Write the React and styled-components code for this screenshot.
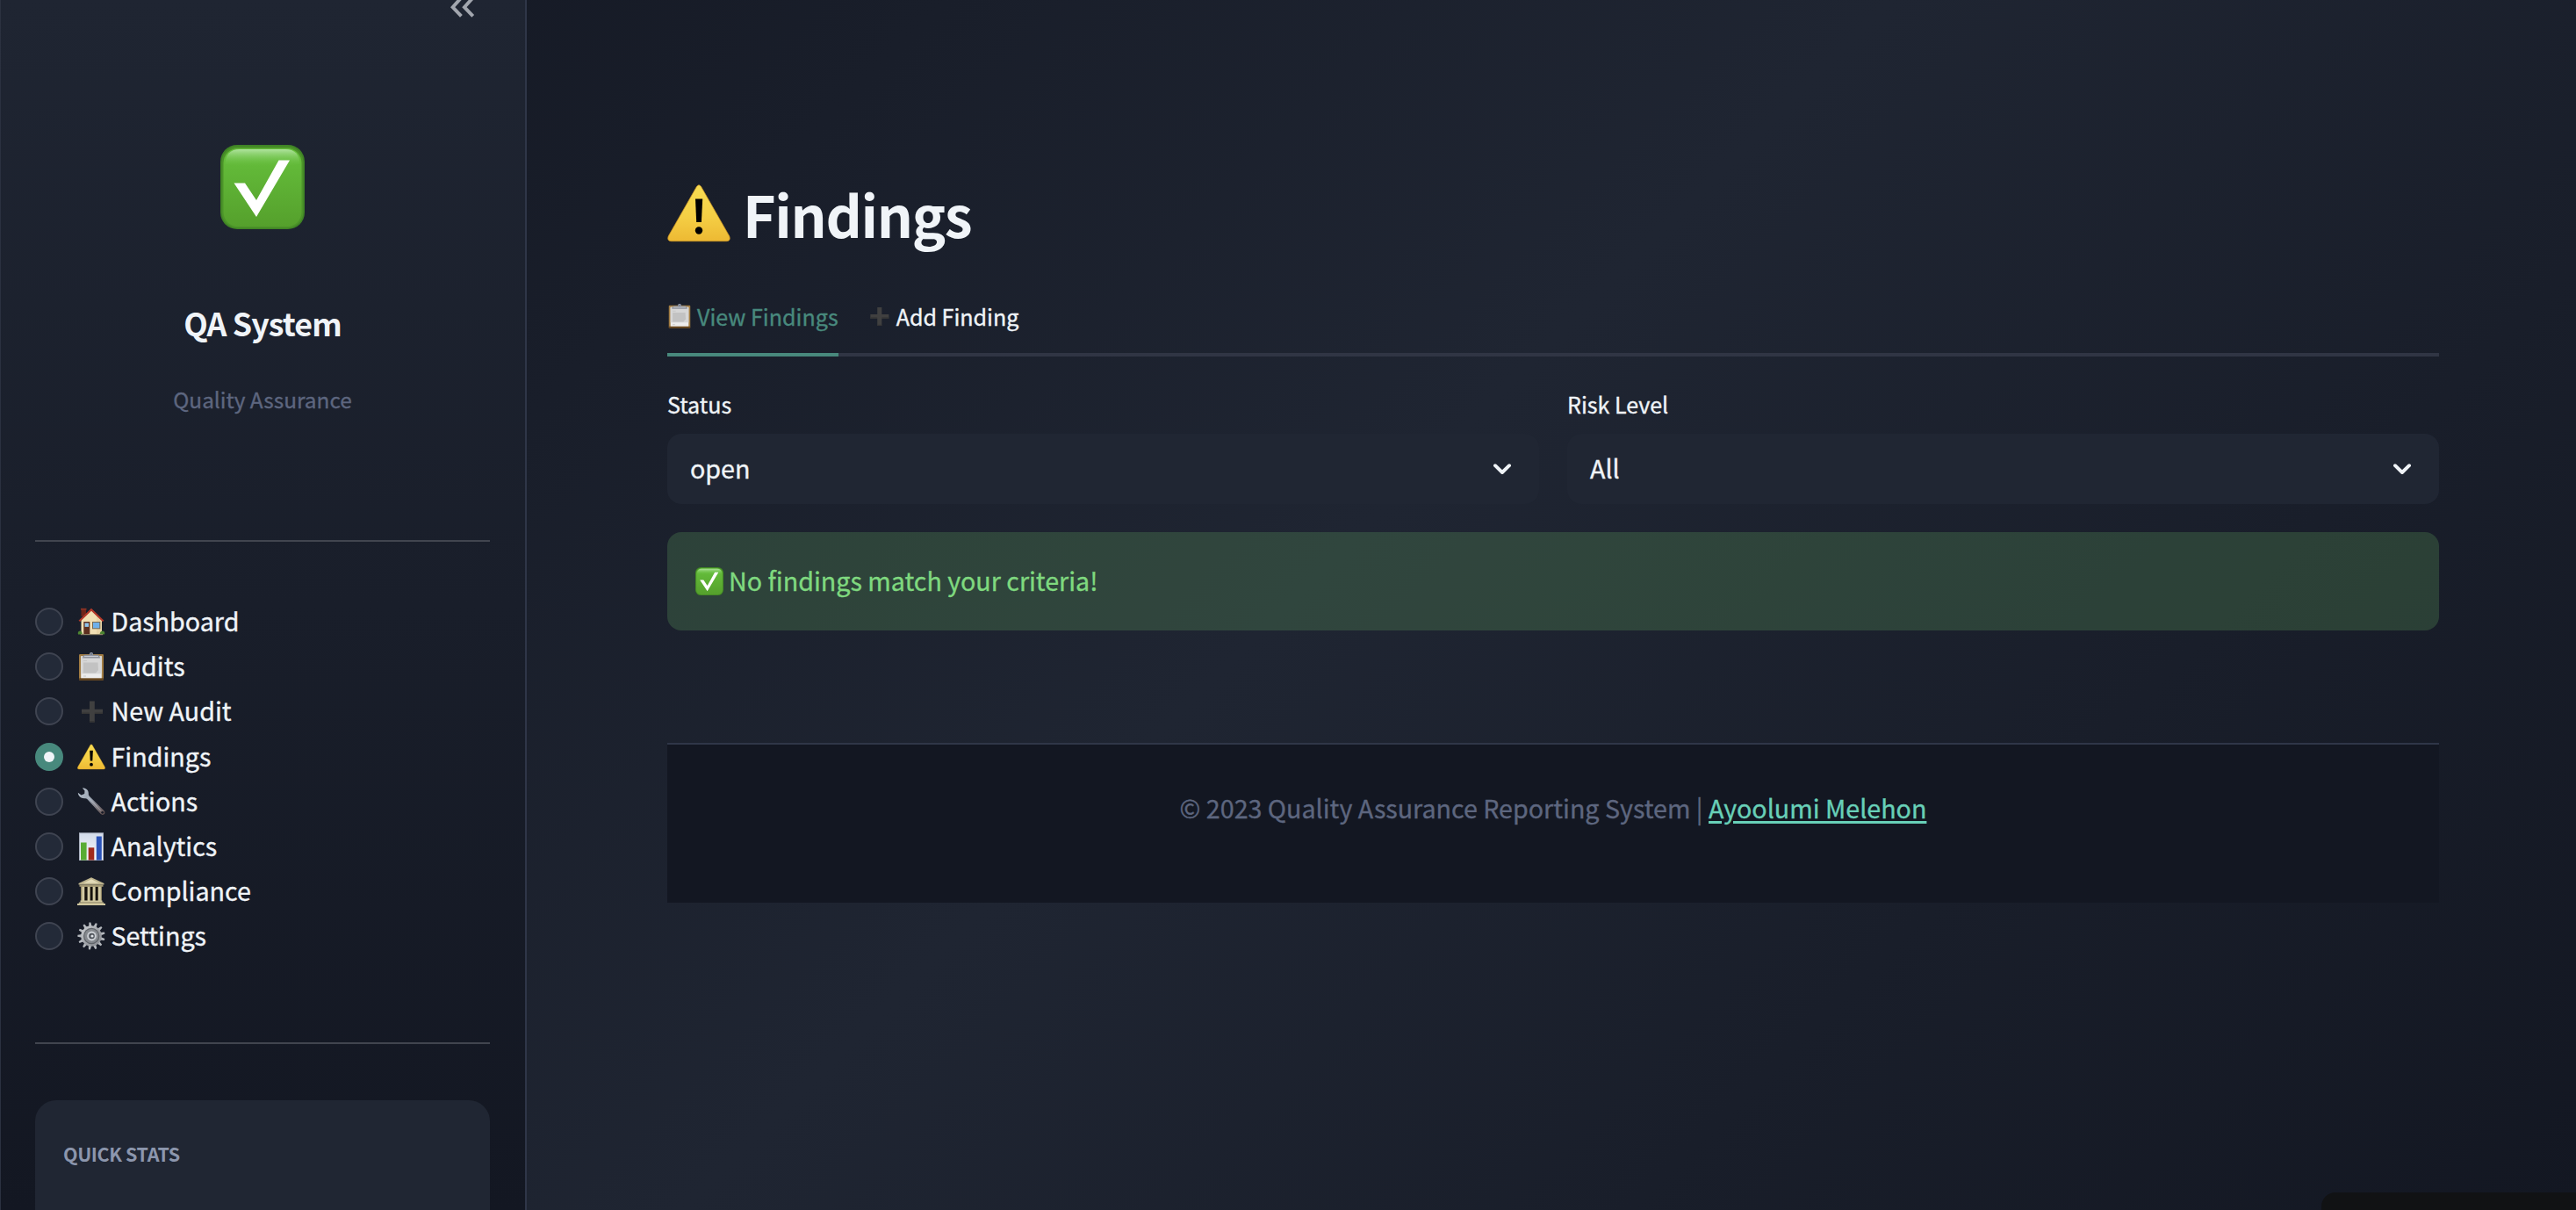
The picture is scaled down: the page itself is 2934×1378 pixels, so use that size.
import React from "react";
import styled, { createGlobalStyle, css } from "styled-components";

const ink = "#f0f4f8";
const teal = "#48897d";
const panel = "#1f2532";
const night = "#131722";

const GlobalStyle = createGlobalStyle`
  *, *::before, *::after { box-sizing: border-box; }
  html, body { margin: 0; overflow: hidden; }
  body {
    font-family: "Noto Sans CJK SC", "Noto Sans", sans-serif;
    color: ${ink};
    background: ${night};
    -webkit-text-stroke: 0.35px currentColor;
  }
  svg { display: block; flex: none; }
`;

const Page = styled.div`
  display: flex;
  width: 100vw;
  height: 100vh;
  overflow: hidden;
  position: relative;
  background: linear-gradient(135deg, ${night} 0%, ${panel} 50%, ${night} 100%);
`;

/* ---------- sidebar ---------- */

const Sidebar = styled.aside`
  flex: none;
  width: 600px;
  height: 100vh;
  overflow: hidden;
  display: flex;
  flex-direction: column;
  padding: 0 40px 0 39px;
  border-left: 1px solid #2b3140;
  border-right: 2px solid #2f3648;
  background: linear-gradient(180deg, ${panel} 0%, ${night} 100%);
`;

const CollapseRow = styled.div`
  flex: none;
  height: 20px;
  overflow: hidden;
  display: flex;
  justify-content: flex-end;
  align-items: flex-end;
  padding-right: 17px;
`;

const Brand = styled.div`
  flex: none;
  display: flex;
  flex-direction: column;
  align-items: center;
  padding-top: 145px;
`;

const BrandName = styled.div`
  margin-top: 82px;
  font-size: 35.8px;
  line-height: 48px;
  font-weight: 700;
  letter-spacing: -0.9px;
  -webkit-text-stroke: 0;
`;

const BrandTagline = styled.div`
  margin-top: 44px;
  font-size: 24.4px;
  line-height: 40px;
  color: #5d667f;
`;

const Rule = styled.hr`
  flex: none;
  width: 100%;
  height: 2px;
  border: 0;
  margin: ${(p) => p.$space};
  background: #41454f;
`;

const Menu = styled.ul`
  flex: none;
  list-style: none;
  margin: 0;
  padding: 0;
`;

const MenuItem = styled.li`
  height: 51.2px;
  display: flex;
  align-items: center;
`;

const Radio = styled.span`
  flex: none;
  width: 32px;
  height: 32px;
  margin-right: 16px;
  border-radius: 50%;
  display: flex;
  align-items: center;
  justify-content: center;
  background: #232a38;
  border: 2px solid #3f4451;
  ${(p) =>
    p.$on &&
    css`
      background: ${teal};
      border-color: ${teal};
      &::after {
        content: "";
        width: 12px;
        height: 12px;
        border-radius: 50%;
        background: ${ink};
      }
    `}
`;

const Label = styled.span`
  font-size: 28.65px;
  line-height: 40px;
  padding-bottom: ${(p) => p.$lift || "3px"};
  margin-left: ${(p) => p.$gap || "0"};
  white-space: nowrap;
`;

const StatsCard = styled.section`
  flex: none;
  height: 200px;
  padding: 45px 32px;
  border-radius: 24px;
  background: #202633;
`;

const StatsTitle = styled.div`
  font-size: 21.5px;
  line-height: 32px;
  font-weight: 700;
  letter-spacing: -0.4px;
  color: #8c96ad;
  -webkit-text-stroke: 0;
`;

/* ---------- main ---------- */

const Main = styled.main`
  flex: 1;
  min-width: 0;
  display: flex;
  flex-direction: column;
  padding: 200px 156px 0 160px;
`;

const Heading = styled.h1`
  margin: 0;
  height: 86px;
  display: flex;
  align-items: center;
  gap: 14px;
  font-size: 64.4px;
  line-height: 86px;
  font-weight: 700;
  letter-spacing: -1.35px;
  -webkit-text-stroke: 0;
`;

const Tabs = styled.div`
  margin-top: 54px;
  height: 66px;
  display: flex;
  gap: 32px;
  box-shadow: inset 0 -4px 0 #303544;
`;

const Tab = styled.div`
  display: flex;
  gap: 6px;
  height: 66px;
  font-size: 25.07px;
  line-height: 40px;
  color: ${(p) => (p.$active ? teal : ink)};
  border-bottom: 4px solid ${(p) => (p.$active ? teal : "transparent")};
  & > svg { margin-top: 6px; }
`;

const Filters = styled.div`
  margin-top: 34px;
  display: grid;
  grid-template-columns: 1fr 1fr;
  gap: 32px;
`;

const FieldLabel = styled.div`
  font-size: 25.07px;
  line-height: 40px;
  margin-bottom: 14px;
`;

const Select = styled.div`
  height: 80px;
  padding: 0 32px 0 26px;
  display: flex;
  align-items: center;
  justify-content: space-between;
  border-radius: 16px;
  background: #202633;
`;

const Alert = styled.div`
  margin-top: 32px;
  height: 112px;
  padding: 0 32px;
  display: flex;
  align-items: center;
  border-radius: 16px;
  color: #7fd97f;
  background: rgba(120, 205, 110, 0.2);
`;

const Footer = styled.footer`
  margin-top: 128px;
  height: 182px;
  padding-top: 52px;
  border-top: 2px solid #2f3648;
  background: ${night};
  color: #5d667f;
  text-align: center;
  font-size: 28.65px;
  line-height: 40px;
`;

const FooterLink = styled.a`
  color: #68d0b8;
  text-decoration: underline;
  text-decoration-thickness: 3px;
  text-underline-offset: 3px;
`;

const CornerBadge = styled.div`
  position: absolute;
  right: 0;
  bottom: 0;
  width: 290px;
  height: 20px;
  border-top-left-radius: 16px;
  background: #111214;
`;

/* ---------- drawings ---------- */

const CheckIcon = ({ size, id }) => (
  <svg width={size} height={size} viewBox="0 0 96 96">
    <defs>
      <linearGradient id={id + "b"} x1="0" y1="0" x2="0" y2="1">
        <stop offset="0" stopColor="#66c03c" />
        <stop offset="1" stopColor="#55a02c" />
      </linearGradient>
      <linearGradient id={id + "g"} x1="0" y1="0" x2="0" y2="1">
        <stop offset="0" stopColor="#b4e5a4" stopOpacity=".95" />
        <stop offset="1" stopColor="#66c03c" stopOpacity="0" />
      </linearGradient>
    </defs>
    <rect width="96" height="96" rx="19" fill="#3f8325" />
    <rect x="1.5" y="2" width="93" height="92.500" rx="18" fill="#4c9429" />
    <rect x="3.500" y="4" width="89" height="89" rx="16.500" fill={`url(#${id}b)`} />
    <path d="M5.500 22Q6 5 22 5H74Q90 5 90.500 22Q76 25 48 25T5.500 22Z" fill={`url(#${id}g)`} />
    <path d="M66.500 17.500H79L41 82L15.500 43.500H28L41 63Z" fill="#fff" />
  </svg>
);

const WarningIcon = ({ size, id }) => (
  <svg width={size} height={size} viewBox="0 0 72 72">
    <defs>
      <linearGradient id={id} x1="0" y1="0" x2="0" y2="1">
        <stop offset="0" stopColor="#f7dc52" />
        <stop offset=".55" stopColor="#f5cf45" />
        <stop offset="1" stopColor="#edb933" />
      </linearGradient>
    </defs>
    <path
      d="M33.400 5.600Q36 1.800 38.600 5.600L70.800 62Q72.600 67.600 67.500 67.700H4.500Q-.600 67.600 1.200 62Z"
      fill={`url(#${id})`}
      stroke="#c98f22"
      strokeWidth=".7"
    />
    <path d="M32 19.500H40.200L38.900 46H33.200Z" fill="#000" />
    <circle cx="36" cy="55.500" r="4.200" fill="#000" />
  </svg>
);

const HomeIcon = () => (
  <svg width="32" height="32" viewBox="0 0 32 32">
    <path d="M4.500 1H10V10H4.500Z" fill="#6f2419" />
    <path d="M4 .8H10.500V2.600H4Z" fill="#8c3325" />
    <path d="M4.500 14L16 3L28 14.500V30.500H4.500Z" fill="#f1dfb4" />
    <path d="M22 9L28 14.500V30.500H22Z" fill="#e4cf9f" opacity=".6" />
    <path d="M1.500 14.800L16 .8L30.500 14.800L28.800 16L16 3.800L3.200 16Z" fill="#b5392a" />
    <rect x="7.300" y="16" width="7" height="14.500" fill="#5d2f1f" />
    <rect x="8.600" y="17.500" width="4.400" height="4.400" fill="#8fc4ee" />
    <rect x="17" y="16" width="9.300" height="8.300" fill="#7a6a50" />
    <rect x="18" y="17" width="7.300" height="6.300" fill="#6fb0ea" />
    <path d="M1 30.500Q0 27 3 26.500Q5.500 26.500 5.800 30.500Z" fill="#4d8431" />
    <path d="M25.500 30.500Q26 26.500 29 26.500Q32 27 31 30.500Z" fill="#4d8431" />
    <rect x="4" y="30" width="25" height="1.200" fill="#8c8166" />
  </svg>
);

const ClipboardIcon = ({ size }) => (
  <svg width={size} height={size} viewBox="0 0 32 32">
    <rect x="2" y="2" width="28" height="29.800" rx="1.200" fill="#a07b42" />
    <rect x="2" y="29.300" width="28" height="2.500" rx="1" fill="#60411d" />
    <rect x="4.200" y="4.300" width="23.600" height="25" fill="#ececec" />
    <rect x="4.200" y="4.300" width="23.600" height="20" fill="#d6d6d6" />
    <path d="M7 9.500H11M7 27H10" stroke="#c2c2c2" strokeWidth=".8" />
    <path d="M7 11.500H23.500L24 20L21 23.500H7Z" fill="#c2c2c2" />
    <path d="M6 6.500Q6.300 3 9 2.800H23Q25.700 3 26 6.500Z" fill="#8d919b" />
    <path d="M8 4.200H24V5H8Z" fill="#d8dbe2" />
    <circle cx="16" cy="2" r="2.100" fill="#8f97a6" />
    <circle cx="16" cy="1.900" r=".8" fill="#59606e" />
  </svg>
);

const PlusIcon = ({ size }) => (
  <svg width={size} height={size} viewBox="0 0 32 32">
    <path d="M14 4.500H19.800V13.800H29V19H19.800V28.500H14V19H5V13.800H14Z" fill="#404040" />
    <path d="M5 17.500H14V19H5ZM19.800 17.500H29V19H19.800ZM14 27H19.800V28.500H14Z" fill="#353535" />
  </svg>
);

const WrenchIcon = () => (
  <svg width="32" height="32" viewBox="0 0 32 32">
    <defs>
      <linearGradient id="wr" x1="0" y1="0" x2="1" y2="1">
        <stop offset="0" stopColor="#b9c3cf" />
        <stop offset=".45" stopColor="#9aa3b0" />
        <stop offset="1" stopColor="#5d4a48" />
      </linearGradient>
    </defs>
    <path
      d="M5.800 .6C10 .2 13.200 3 12.800 7.300Q12.800 8.800 14 10L30.500 26.200Q32.400 28.500 30.600 30.300Q28.600 31.800 26.500 29.800L11.500 13.200Q10.300 12 8.600 12.200C4.600 12.600 1.200 10 .8 5.800L4.600 8.400L8.200 6.900L8.500 3.500Z"
      fill="url(#wr)"
    />
    <path d="M12 10.500L27 26.500" stroke="#d6dce4" strokeWidth="1" opacity=".5" />
    <circle cx="28.700" cy="28.300" r="1.400" fill="#181c29" />
  </svg>
);

const ChartIcon = () => (
  <svg width="32" height="32" viewBox="0 0 32 32">
    <defs>
      <linearGradient id="ch" x1="0" y1="0" x2="0" y2="1">
        <stop offset="0" stopColor="#d3dceb" />
        <stop offset="1" stopColor="#f6f8fb" />
      </linearGradient>
    </defs>
    <rect x="2" y=".2" width="28" height="31.800" fill="#a9b0bf" />
    <rect x="3" y="1.200" width="26" height="30" fill="url(#ch)" />
    <rect x="4" y="11.500" width="6.600" height="20" fill="#58ac33" />
    <rect x="12.700" y="17.300" width="6.600" height="14.200" fill="#a12a1c" />
    <rect x="21.800" y="4.500" width="6" height="27" fill="#2b53b8" />
  </svg>
);

const TempleIcon = () => (
  <svg width="32" height="32" viewBox="0 0 32 32">
    <path d="M4 9H28V27H4Z" fill="#8f8564" />
    <path d="M8 11H12V27H8ZM14.500 11H18V27H14.500ZM20.500 11H24.500V27H20.500Z" fill="#15110c" />
    <path d="M5.300 10H8.300V27H5.300ZM11.600 10H14.500V27H11.600ZM17.600 10H20.500V27H17.600ZM23.700 10H26.800V27H23.700Z" fill="#d3caa2" />
    <path d="M16 .3L30.500 7V8.500H1.500V7Z" fill="#bdb48e" />
    <path d="M16 2.300L25 6.800H7Z" fill="#e2dab8" />
    <rect x="2.500" y="8.500" width="27" height="2.300" fill="#a09672" />
    <rect x="3.500" y="26.500" width="25" height="2.200" fill="#d0c7a0" />
    <rect x="1.800" y="28.500" width="28.400" height="1.700" fill="#b5ab83" />
    <rect x="0" y="30" width="32" height="2" fill="#d0c7a0" />
  </svg>
);

const GearIcon = () => (
  <svg width="32" height="32" viewBox="0 0 32 32">
    <defs>
      <linearGradient id="gr" x1="0" y1="0" x2="1" y2="1">
        <stop offset="0" stopColor="#d0d3d6" />
        <stop offset=".5" stopColor="#a2a5aa" />
        <stop offset="1" stopColor="#86898e" />
      </linearGradient>
    </defs>
    {Array.from({ length: 13 }, (_, i) => (
      <path
        key={i}
        d="M14.200 5.500L15 .4H17L17.800 5.500Z"
        fill="#b4b8bd"
        transform={`rotate(${(i * 360) / 13 - 6} 16 16)`}
      />
    ))}
    <circle cx="16" cy="16" r="11.800" fill="url(#gr)" />
    <circle cx="16.200" cy="16" r="9.200" fill="#5f6368" />
    <circle cx="16.200" cy="16" r="8" fill="#85898e" />
    <circle cx="16.500" cy="16" r="5.400" fill="#c9cdd2" />
    <circle cx="16.500" cy="16" r="3.300" fill="#4d5259" />
    <circle cx="17" cy="16" r="1.600" fill="#dfe3e8" />
  </svg>
);

const ChevronDown = () => (
  <svg width="20" height="13" viewBox="0 0 20 13">
    <path d="M2 2.200L10 10L18 2.200" fill="none" stroke={ink} strokeWidth="3.900" strokeLinecap="round" strokeLinejoin="round" />
  </svg>
);

const CollapseIcon = () => (
  <svg width="28" height="24" viewBox="0 0 28 24">
    <path
      d="M12.400 1.400L2.600 12.200L12.400 22.400M25.700 1.400L15.900 12.200L25.700 22.400"
      fill="none"
      stroke="#a2a6ae"
      strokeWidth="3.900"
    />
  </svg>
);

const pages = [
  { name: "Dashboard", icon: <HomeIcon /> },
  { name: "Audits", icon: <ClipboardIcon size={32} /> },
  { name: "New Audit", icon: <PlusIcon size={32} /> },
  { name: "Findings", icon: <WarningIcon size={32} id="warnMenu" />, active: true },
  { name: "Actions", icon: <WrenchIcon /> },
  { name: "Analytics", icon: <ChartIcon /> },
  { name: "Compliance", icon: <TempleIcon /> },
  { name: "Settings", icon: <GearIcon /> },
];

const filters = [
  { label: "Status", value: "open" },
  { label: "Risk Level", value: "All" },
];

export default function App() {
  return (
    <>
      <GlobalStyle />
      <Page>
        <Sidebar>
          <CollapseRow>
            <CollapseIcon />
          </CollapseRow>
          <Brand>
            <CheckIcon size={96} id="logo" />
            <BrandName>QA System</BrandName>
            <BrandTagline>Quality Assurance</BrandTagline>
          </Brand>
          <Rule $space="140px 0 65.400px" />
          <Menu>
            {pages.map((p) => (
              <MenuItem key={p.name}>
                <Radio $on={p.active} />
                {p.icon}
                <Label $gap="6.5px" $lift="2px">{p.name}</Label>
              </MenuItem>
            ))}
          </Menu>
          <Rule $space="95px 0 64px" />
          <StatsCard>
            <StatsTitle>QUICK STATS</StatsTitle>
          </StatsCard>
        </Sidebar>
        <Main>
          <Heading>
            <WarningIcon size={72} id="warnTitle" />
            Findings
          </Heading>
          <Tabs>
            <Tab $active>
              <ClipboardIcon size={28} />
              View Findings
            </Tab>
            <Tab>
              <PlusIcon size={28} />
              Add Finding
            </Tab>
          </Tabs>
          <Filters>
            {filters.map((f) => (
              <div key={f.label}>
                <FieldLabel>{f.label}</FieldLabel>
                <Select>
                  <Label>{f.value}</Label>
                  <ChevronDown />
                </Select>
              </div>
            ))}
          </Filters>
          <Alert>
            <CheckIcon size={32} id="ok" />
            <Label $gap="6px">No findings match your criteria!</Label>
          </Alert>
          <Footer>
            © 2023 Quality Assurance Reporting System | <FooterLink>Ayoolumi Melehon</FooterLink>
          </Footer>
        </Main>
        <CornerBadge />
      </Page>
    </>
  );
}
